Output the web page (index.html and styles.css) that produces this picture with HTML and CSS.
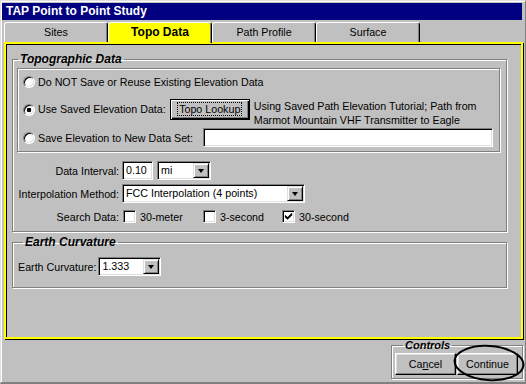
FILE: index.html
```html
<!DOCTYPE html>
<html lang="en">

<head>
  <meta charset="UTF-8">
  <title>TAP Point to Point Study</title>
  <link rel="stylesheet" href="styles.css">
</head>

<body>
  <div class="window">
    <div class="titlebar">TAP Point to Point Study</div>

    <div class="tabs">
      <div class="tab">Sites</div>
      <div class="tab active">Topo Data</div>
      <div class="tab">Path Profile</div>
      <div class="tab">Surface</div>
    </div>

    <div class="panel">
      <fieldset class="group topo">
        <legend>Topographic Data</legend>
        <div class="radio-box">
          <div class="row">
            <span class="radio"></span>
            <span>Do NOT Save or Reuse Existing Elevation Data</span>
          </div>
          <div class="row row-lookup">
            <span class="radio checked"></span>
            <span class="lookup-label">Use Saved Elevation Data:</span>
            <button class="btn default"><span class="focus">Topo Lookup</span></button>
            <span class="note">Using Saved Path Elevation Tutorial; Path from<br>Marmot Mountain VHF Transmitter to Eagle</span>
          </div>
          <div class="row row-save">
            <span class="radio"></span>
            <span>Save Elevation to New Data Set:</span>
            <span class="field dataset"></span>
          </div>
        </div>

        <div class="form">
          <span class="flabel">Data Interval:</span>
          <div class="ctrl">
            <span class="field interval">0.10</span>
            <span class="combo unit"><span class="value">mi</span><span class="drop"></span></span>
          </div>

          <span class="flabel">Interpolation Method:</span>
          <div class="ctrl">
            <span class="combo method"><span class="value">FCC Interpolation (4 points)</span><span class="drop"></span></span>
          </div>

          <span class="flabel">Search Data:</span>
          <div class="ctrl checks">
            <span class="check-item"><span class="checkbox"></span>30-meter</span>
            <span class="check-item"><span class="checkbox"></span>3-second</span>
            <span class="check-item"><span class="checkbox"><svg width="9" height="9" viewBox="0 0 9 9"><path d="M1 3.5 L3.5 6 L8 1.5 M1 4.5 L3.5 7 L8 2.5" stroke="#000" stroke-width="1.2" fill="none"/></svg></span>30-second</span>
          </div>
        </div>
      </fieldset>

      <fieldset class="group earth">
        <legend>Earth Curvature</legend>
        <div class="earth-row">
          <span>Earth Curvature:</span>
          <span class="combo curvature"><span class="value">1.333</span><span class="drop"></span></span>
        </div>
      </fieldset>
    </div>

    <div class="footer">
      <fieldset class="group controls">
        <legend>Controls</legend>
        <div class="buttons">
          <button class="btn">Ca<u>n</u>cel</button>
          <button class="btn">Continue</button>
        </div>
      </fieldset>
      <svg class="circled" width="74" height="40" viewBox="0 0 74 40">
        <ellipse cx="37" cy="19" rx="34.5" ry="17" transform="rotate(4 37 19)" fill="none" stroke="#000" stroke-width="2"/>
      </svg>
    </div>
  </div>
</body>
</html>
```

FILE: styles.css
```css
* {
  box-sizing: border-box;
}

body {
  margin: 0;
  font-family: "Liberation Sans", Arial, sans-serif;
  font-size: 10.7px;
  color: #000;
  background: #c0c0c0;
}

.window {
  width: 526px;
  height: 384px;
  background: #c0c0c0;
  border-top: 1px solid #dfdfdf;
  border-left: 1px solid #dfdfdf;
  border-right: 1px solid #808080;
  border-bottom: 2px solid #808080;
  box-shadow: inset 1px 1px 0 #fff;
  padding: 2px 0 0 1px;
}

.titlebar {
  width: 520px;
  height: 17px;
  background: #000080;
  color: #fff;
  font-weight: bold;
  font-size: 12px;
  line-height: 17px;
  padding-left: 4px;
}

/* tabs */
.tabs {
  display: flex;
  align-items: flex-end;
  height: 20px;
  margin: 2px 0 0 2px;
}

.tab {
  width: 104px;
  height: 20px;
  text-align: center;
  line-height: 18px;
  border-top: 1px solid #fff;
  border-left: 1px solid #fff;
  border-right: 1px solid #000;
  border-radius: 3px 3px 0 0;
  box-shadow: inset -1px 0 0 #808080;
}

.tab.active {
  height: 21px;
  margin-bottom: -1px;
  background: #ffff00;
  font-weight: bold;
  font-size: 12px;
  line-height: 19px;
  position: relative;
  z-index: 1;
}

.panel {
  margin-left: 2px;
  width: 519px;
  height: 297px;
  border: 2px solid #ffff00;
  box-shadow: inset 1px 1px 0 #000, 1px 1px 0 #000;
  padding: 8px 0 0 6px;
}

/* etched group boxes */
.group {
  margin: 0;
  padding: 0;
  min-width: 0;
  border: 1px solid #808080;
  box-shadow: inset 1px 1px 0 #fff, 1px 1px 0 #fff;
}

.group legend {
  margin-left: 5px;
  padding: 0 2px;
  font-weight: bold;
  font-style: italic;
  font-size: 12px;
  line-height: 14px;
}

.topo {
  width: 495px;
  padding-bottom: 5px;
}

.radio-box {
  margin: 2px 0 0 4px;
  width: 483px;
  border: 1px solid #808080;
  box-shadow: inset 1px 1px 0 #fff, 1px 1px 0 #fff;
  padding: 6px 6px 4px 5px;
}

.row {
  display: flex;
  align-items: center;
  gap: 3px;
  line-height: 14px;
  white-space: nowrap;
}

.row-lookup {
  margin-top: 10px;
  align-items: flex-start;
}

.row-lookup .radio {
  margin-top: 5px;
}

.lookup-label {
  line-height: 21px;
}

.row-lookup .btn {
  margin-left: 1px;
  width: 80px;
  height: 21px;
}

.note {
  margin-left: 1px;
}

.row-save {
  margin-top: 1px;
  height: 19px;
}

.radio {
  flex: none;
  width: 12px;
  height: 12px;
  border-radius: 50%;
  background: #fff;
  border: 1px solid;
  border-color: #808080 #fff #fff #808080;
  box-shadow: inset 1px 1px 0 #000, inset -1px -1px 0 #dfdfdf;
}

.radio.checked {
  background: radial-gradient(circle, #000 0 2px, #fff 2.6px);
}

/* sunken fields */
.field,
.combo {
  height: 19px;
  background: #fff;
  border: 1px solid;
  border-color: #808080 #fff #fff #808080;
  box-shadow: inset 1px 1px 0 #000, inset -1px -1px 0 #dfdfdf;
}

.field {
  display: block;
  padding-left: 3px;
  line-height: 17px;
}

.dataset {
  width: 290px;
  margin-left: auto;
}

.interval {
  width: 31px;
}

.combo {
  display: flex;
  padding: 1px;
}

.combo .value {
  flex: 1;
  padding-left: 2px;
  line-height: 15px;
  white-space: nowrap;
}

.drop {
  width: 16px;
  height: 15px;
  display: flex;
  align-items: center;
  justify-content: center;
  border: 1px solid;
  border-color: #dfdfdf #000 #000 #dfdfdf;
  box-shadow: inset 1px 1px 0 #fff, inset -1px -1px 0 #808080;
  background: #c0c0c0;
}

.drop::after {
  content: "";
  border-top: 4px solid #000;
  border-left: 3.5px solid transparent;
  border-right: 3.5px solid transparent;
}

.unit {
  width: 54px;
}

.method {
  width: 183px;
}

.curvature {
  width: 63px;
}

/* label / control grid */
.form {
  margin: 9px 0 0 4px;
  display: grid;
  grid-template-columns: 102px auto;
  column-gap: 3px;
  row-gap: 4px;
  grid-auto-rows: 19px;
  align-items: center;
}

.flabel {
  text-align: right;
  white-space: nowrap;
}

.ctrl {
  display: flex;
  align-items: center;
  gap: 4px;
}

.ctrl.checks {
  gap: 0;
}

.check-item {
  width: 80px;
  display: flex;
  align-items: center;
  gap: 4px;
  padding-left: 1px;
}

.check-item:last-child {
  width: auto;
  margin-left: -1px;
}

.checkbox {
  width: 13px;
  height: 13px;
  display: flex;
  align-items: center;
  justify-content: center;
  background: #fff;
  border: 1px solid;
  border-color: #808080 #fff #fff #808080;
  box-shadow: inset 1px 1px 0 #000, inset -1px -1px 0 #dfdfdf;
}

.earth {
  width: 495px;
  margin-top: 3px;
  padding: 8px 0 11px 5px;
}

.earth-row {
  display: flex;
  align-items: center;
  gap: 2px;
}

/* buttons */
.btn {
  font-family: inherit;
  font-size: 10.7px;
  color: #000;
  background: #c0c0c0;
  padding: 0;
  border: 1px solid;
  border-color: #fff #000 #000 #fff;
  box-shadow: inset -1px -1px 0 #808080, inset 1px 1px 0 #dfdfdf;
}

.btn.default {
  border: 1px solid #000;
  box-shadow: inset 1px 1px 0 #fff, inset -1px -1px 0 #000, inset -2px -2px 0 #808080;
}

.focus {
  outline: 1px dotted #000;
  padding: 0 1px;
  line-height: 13px;
}

.footer {
  display: flex;
  justify-content: flex-end;
  margin-right: 2px;
  position: relative;
}

.controls {
  width: 132px;
  padding: 0 0 3px 3px;
}

.controls legend {
  margin-left: 8px;
  font-size: 11px;
  line-height: 13px;
}

.buttons {
  display: flex;
  gap: 1px;
  margin-top: 1px;
}

.buttons .btn {
  width: 61px;
  height: 22px;
}

.circled {
  position: absolute;
  right: -3px;
  top: 5px;
  pointer-events: none;
}
```
